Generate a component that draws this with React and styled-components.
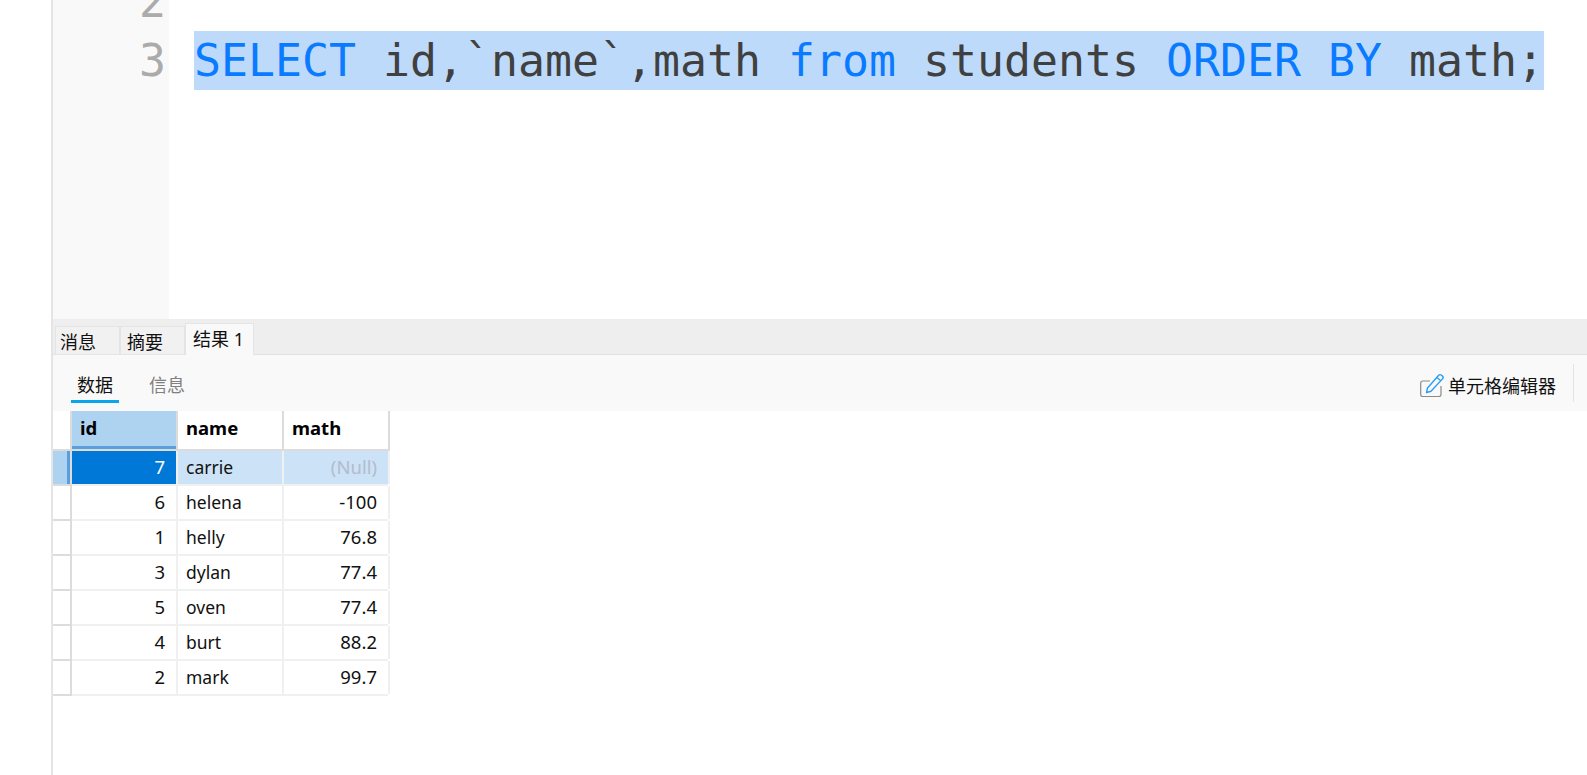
import React from 'react';
import styled, { createGlobalStyle } from 'styled-components';

const uiFont = '"Noto Sans", "Noto Sans CJK SC", sans-serif';

const GlobalStyle = createGlobalStyle`
  html, body {
    margin: 0;
    padding: 0;
    background: #fff;
  }
  * {
    box-sizing: border-box;
  }
`;

const Page = styled.div`
  display: flex;
  width: 1587px;
  height: 775px;
  overflow: hidden;
  background: #fff;
  font-family: ${uiFont};
`;

const Blank = styled.div`
  flex: 0 0 51px;
`;

const Main = styled.div`
  flex: 1;
  min-width: 0;
  display: flex;
  flex-direction: column;
  border-left: 2px solid #e5e5e5;
`;

const Editor = styled.div`
  flex: 0 0 319px;
  display: flex;
  overflow: hidden;
  font-family: "DejaVu Sans Mono", monospace;
  font-size: 44.85px;
  line-height: 59px;
`;

const Gutter = styled.div`
  flex: 0 0 116px;
  margin-right: 25px;
  padding-right: 3px;
  background: #f9f9f9;
  color: #ababab;
  text-align: right;
`;

const LineNumber = styled.div`
  height: 59px;
  &:first-child {
    margin-top: -28px;
  }
`;

const Code = styled.div`
  flex: 1;
  white-space: pre;
`;

const CodeLine = styled.div`
  height: 59px;
  &:first-child {
    margin-top: -28px;
  }
`;

const Selected = styled.span`
  display: inline-block;
  height: 59px;
  background: #bddafa;
  color: #404040;
`;

const Keyword = styled.span`
  color: #0a7bff;
`;

const TabBar = styled.div`
  flex: 0 0 36px;
  display: flex;
  align-items: flex-end;
  padding-left: 2px;
  background: #eeeeee;
  border-bottom: 1px solid #e2e2e2;
`;

const Tab = styled.div`
  height: ${p => (p.$active ? '32px' : '29px')};
  width: ${p => (p.$active ? '69px' : '65px')};
  margin-bottom: -1px;
  padding: ${p => (p.$active ? '0 0 3px 7px' : `0 0 0 ${p.$inset || 6}px`)};
  display: flex;
  align-items: center;
  background: ${p => (p.$active ? '#f9f9f9' : '#f1f1f1')};
  border: 1px solid #e4e4e4;
  border-bottom: ${p => (p.$active ? 'none' : '1px solid #e4e4e4')};
  font-size: 18px;
  color: #111;
`;

const Toolbar = styled.div`
  flex: 0 0 56px;
  display: flex;
  align-items: center;
  justify-content: space-between;
  padding: 0 13px 0 18px;
  background: #f9f9f9;
`;

const SubTabs = styled.div`
  display: flex;
  gap: 24px;
`;

const SubTab = styled.div`
  width: 48px;
  height: 37px;
  margin-top: 3px;
  padding-top: 6px;
  text-align: center;
  font-size: 18px;
  line-height: 26px;
  color: ${p => (p.$active ? '#111' : '#808080')};
  border-bottom: 3px solid ${p => (p.$active ? '#0ba5ec' : 'transparent')};
`;

const CellEditor = styled.div`
  display: flex;
  align-items: center;
  gap: 4px;
  height: 38px;
  padding: 4px 17px 0 0;
  border-right: 1px solid #e4e4e4;
  font-size: 18px;
  color: #111;
`;

const Table = styled.div`
  display: grid;
  grid-template-columns: 17px 2px 104px 2px 104px 2px 104px 2px;
  width: 335px;
  background: #f0f0f0;
`;

const Marker = styled.div`
  height: 33px;
  background: ${p => (p.$active ? '#aed3f1' : '#fff')};
  border-right: ${p => (p.$active ? '3px solid #5a9fdc' : 'none')};
`;

const MarkerEdge = styled.div`
  height: 33px;
  background: #dcdcdc;
`;

const RowGap = styled.div`
  grid-column: 1 / -1;
  height: 2px;
  background: ${p => (p.$strong ? '#dcdcdc' : 'transparent')};
  background-image: linear-gradient(to right, #dcdcdc 19px, transparent 19px);
`;

const HeadBlank = styled.div`
  height: 38px;
  background: #fff;
`;

const HeadEdge = styled.div`
  height: 38px;
  background: #dcdcdc;
`;

const HeadCell = styled.div`
  height: 38px;
  padding: 0 0 3px 8px;
  display: flex;
  align-items: center;
  font-size: 18.5px;
  font-weight: 700;
  color: #000;
  background: ${p => (p.$active ? '#aed3f1' : '#fff')};
  border-bottom: 3px solid ${p => (p.$active ? '#5a9fdc' : '#fff')};
`;

const Separator = styled.div`
  height: 33px;
  background: #f0f0f0;
`;

const Cell = styled.div`
  height: 33px;
  padding: 0 ${p => (p.$right ? '11px' : '8px')} 2px;
  display: flex;
  align-items: center;
  justify-content: ${p => (p.$right ? 'flex-end' : 'flex-start')};
  font-size: ${p => (p.$right ? '18.5px' : '17.5px')};
  color: ${p => p.$color || '#111'};
  background: ${p => p.$bg || '#fff'};
`;

const EditIcon = () => (
  <svg width="24" height="24" viewBox="0 0 24 24" fill="none">
    <path d="M10 8H2.5A2 2 0 0 0 .7 10V21.5A2 2 0 0 0 2.7 23.5H19A2 2 0 0 0 21 21.5V13" stroke="#8a8a8a" strokeWidth="1.2" />
    <path d="M6.5 19.5L7.5 15L18.5 2.5C19.3 1.6 20.5 1.4 21.5 2.2L22.3 2.9C23.3 3.8 23.3 5 22.5 5.9L11 18.3Z" stroke="#2a9df4" strokeWidth="1.4" strokeLinejoin="round" />
    <path d="M17 4.5L20.8 7.8" stroke="#2a9df4" strokeWidth="1.2" />
  </svg>
);

const rows = [
  { id: 7, name: 'carrie', math: '(Null)' },
  { id: 6, name: 'helena', math: '-100' },
  { id: 1, name: 'helly', math: '76.8' },
  { id: 3, name: 'dylan', math: '77.4' },
  { id: 5, name: 'oven', math: '77.4' },
  { id: 4, name: 'burt', math: '88.2' },
  { id: 2, name: 'mark', math: '99.7' },
];

function ResultRow({ row, active }) {
  const tint = active ? '#cbe2f7' : '#fff';
  return (
    <>
      <Marker $active={active} />
      <MarkerEdge />
      <Cell $right $bg={active ? '#0078d7' : '#fff'} $color={active ? '#fff' : '#111'}>{row.id}</Cell>
      <Separator />
      <Cell $bg={tint}>{row.name}</Cell>
      <Separator />
      <Cell $right $bg={tint} $color={row.math === '(Null)' ? '#b4bccb' : '#111'}>{row.math}</Cell>
      <Separator />
      <RowGap />
    </>
  );
}

export default function App() {
  return (
    <Page>
      <GlobalStyle />
      <Blank />
      <Main>
        <Editor>
          <Gutter>
            <LineNumber>2</LineNumber>
            <LineNumber>3</LineNumber>
          </Gutter>
          <Code>
            <CodeLine> </CodeLine>
            <CodeLine>
              <Selected>
                <Keyword>SELECT</Keyword> id,`name`,math <Keyword>from</Keyword> students <Keyword>ORDER BY</Keyword> math;
              </Selected>
            </CodeLine>
          </Code>
        </Editor>
        <TabBar>
          <Tab $inset={4}>消息</Tab>
          <Tab>摘要</Tab>
          <Tab $active>结果 1</Tab>
        </TabBar>
        <Toolbar>
          <SubTabs>
            <SubTab $active>数据</SubTab>
            <SubTab>信息</SubTab>
          </SubTabs>
          <CellEditor>
            <EditIcon />
            单元格编辑器
          </CellEditor>
        </Toolbar>
        <Table>
          <HeadBlank />
          <HeadEdge />
          <HeadCell $active>id</HeadCell>
          <HeadEdge />
          <HeadCell>name</HeadCell>
          <HeadEdge />
          <HeadCell>math</HeadCell>
          <HeadEdge />
          <RowGap $strong />
          {rows.map((row, i) => (
            <ResultRow key={row.id} row={row} active={i === 0} />
          ))}
        </Table>
      </Main>
    </Page>
  );
}
